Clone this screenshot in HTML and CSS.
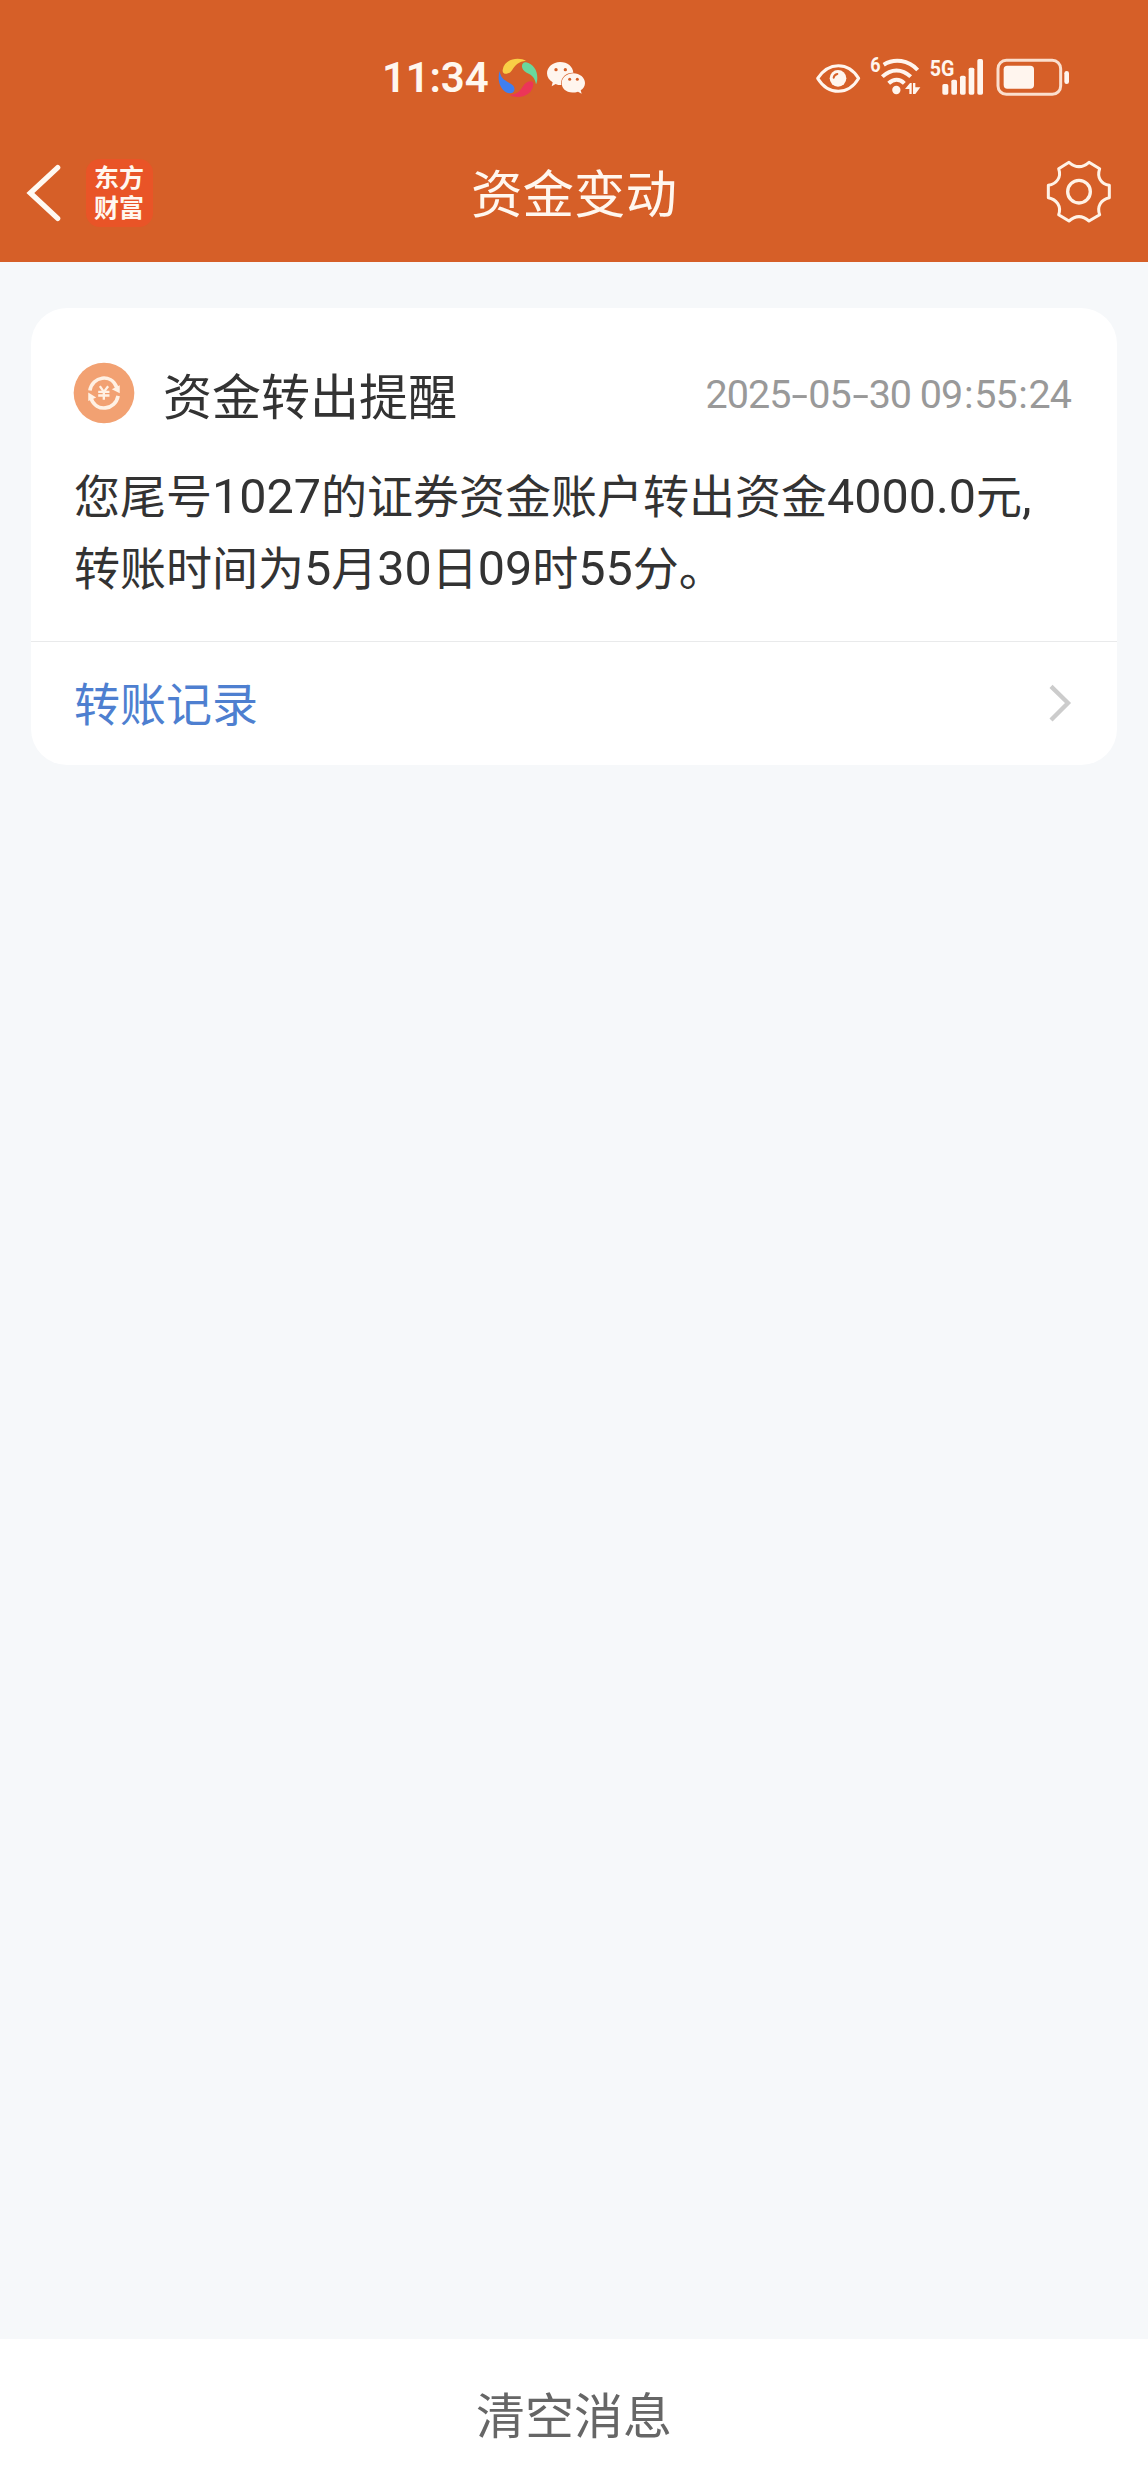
FILE: index.html
```html
<!DOCTYPE html>
<html lang="zh-CN">
<head>
<meta charset="utf-8">
<title>资金变动</title>
<link rel="stylesheet" href="styles.css">
</head>
<body>
<div class="screen">
  <header class="header">
    <div class="status">
      <span class="clock">11:34</span>
      <svg class="ball" viewBox="384 40 120 120">
        <path fill="#f9cf46" d="M398 76C401 55 420 42 443 42C453 42 462 44 468 48C446 50 436 61 427 75C417 92 396 91 398 76Z"/>
        <path fill="#69d89c" d="M468 53C489 57 502 77 502 99C502 107 501 113 498 119C495 101 488 92 470 84C450 75 453 51 468 53Z"/>
        <path fill="#ec3558" d="M490 117C490 142 467 157 443 157C433 157 425 154 419 151C440 149 448 143 459 125C469 108 489 105 490 117Z"/>
        <path fill="#3f7ff0" d="M389 79C391 96 399 105 417 114C441 125 436 145 421 146C402 147 386 124 386 101C386 92 387 85 389 79Z"/>
      </svg>
      <svg class="wechat" viewBox="528 48 120 102">
        <path fill="#fff5ee" d="M570 51C593 51 609 65 610 83C590 82 573 96 573 116L574 120C567 120 562 120 557 117L545 124L548 112C538 105 531 97 531 85C531 66 549 51 570 51Z"/>
        <path fill="#fff5ee" d="M610 85C629 85 645 98 645 114C645 124 640 131 632 136L635 146L624 140C594 149 575 133 575 114C575 98 591 85 610 85Z"/>
        <g fill="#d65f28"><circle cx="558" cy="74" r="5"/><circle cx="586" cy="74" r="5"/><circle cx="599" cy="103" r="4.5"/><circle cx="622" cy="103" r="4.5"/></g>
      </svg>
      <svg class="eye" viewBox="48 54 134 92">
        <path fill="none" stroke="#fff5ee" stroke-width="9" stroke-linejoin="round" d="M53 100C70 74 91 62 115 62C139 62 160 74 176 100C160 127 139 139 115 139C91 139 70 127 53 100Z"/>
        <circle cx="114" cy="100" r="25" fill="#fff5ee"/>
        <path fill="none" stroke="#d65f28" stroke-width="6" stroke-linecap="round" d="M101 98C102 92 106 88 112 87"/>
      </svg>
      <svg class="wifi" viewBox="210 34 152 120">
        <text class="badge-text" x="211" y="83" font-size="61" textLength="31" lengthAdjust="spacingAndGlyphs">6</text>
        <g fill="none" stroke="#fff5ee" stroke-width="12">
          <path d="M251 60C284 40 325 46 353 76"/><path d="M247 96C273 71 306 71 332 96"/><path d="M266 116C281 102 299 102 313 116"/>
        </g>
        <circle cx="289" cy="136" r="12.5" fill="#fff5ee"/>
        <path fill="#fff5ee" d="M315 133L330 115H335V148H328V133ZM339 115H346V128H361L346 148H339Z"/>
      </svg>
      <svg class="signal" viewBox="386 34 168 120">
        <text class="badge-text" x="388" y="94" font-size="66" textLength="74" lengthAdjust="spacingAndGlyphs">5G</text>
        <g fill="#fff5ee"><rect x="426" y="118" width="18" height="32" rx="5"/><rect x="453" y="105" width="17" height="45" rx="5"/><rect x="479" y="93" width="17" height="57" rx="5"/><rect x="505" y="69" width="17" height="81" rx="5"/><rect x="531" y="43" width="17" height="107" rx="5"/></g>
      </svg>
      <svg class="battery" viewBox="588 40 222 116">
        <rect x="594" y="47" width="188" height="102" rx="25" fill="none" stroke="#fbdfce" stroke-width="9"/>
        <rect x="611" y="63" width="91" height="69" rx="11" fill="#fff5ee"/>
        <rect x="793" y="79" width="14" height="39" rx="7" fill="#fff5ee"/>
      </svg>
    </div>
    <div class="nav">
      <svg class="back" viewBox="78 72 105 174"><path fill="none" stroke="#fff9f2" stroke-width="16" stroke-linecap="round" d="M173 83L91 159L173 235"/></svg>
      <div class="logo"><span>东方</span><span>财富</span></div>
      <h1 class="title">资金变动</h1>
      <svg class="gear" viewBox="78 60 198 192">
        <path fill="none" stroke="#fff2e6" stroke-width="9" stroke-linejoin="round" d="M147 67Q177 93 207 67L239 86C230 112 243 132 268 136V173C243 178 230 199 239 224L207 243Q177 217 147 243L116 224C125 199 110 178 85 173V136C110 132 125 112 116 86Z"/>
        <circle cx="177" cy="155" r="34" fill="none" stroke="#fff2e6" stroke-width="10"/>
      </svg>
    </div>
  </header>
  <main class="content">
    <article class="card">
      <div class="card-head">
        <svg class="coin" viewBox="160 217 187 187">
          <circle cx="253.500" cy="310.500" r="91.500" fill="#f2a172"/>
          <g fill="none" stroke="#fff1e4" stroke-width="11"><path d="M211 303C218 260 275 250 292 294"/><path d="M296 319C288 362 230 371 214 326"/></g>
          <path fill="#fff1e4" d="M277 299L301 287V311ZM206 309V335L230 324Z"/>
          <path fill="none" stroke="#fff1e4" stroke-width="7" d="M241 290L253 307L266 290M236 307H270M236 318H270M253 305V331"/>
        </svg>
        <h2 class="card-title">资金转出提醒</h2>
        <time class="date">2025<i>-</i>05<i>-</i>30 09<b>:</b>55<b>:</b>24</time>
      </div>
      <p class="message">您尾号<span class="num">1027</span>的证券资金账户转出资金<span class="num">4000.0</span>元<span class="num">,</span><br>转账时间为<span class="num">5</span>月<span class="num">30</span>日<span class="num">09</span>时<span class="num">55</span>分。</p>
      <div class="link-row">
        <span>转账记录</span>
        <svg class="chevron" viewBox="204 190 72 120"><path fill="none" stroke="#ccc" stroke-width="13" d="M213 200L264 250L213 301"/></svg>
      </div>
    </article>
  </main>
  <footer class="footer">清空消息</footer>
</div>
</body>
</html>
```
FILE: styles.css
```css
* { box-sizing: border-box; }
body {
  margin: 0;
  background: #f6f8fa;
  color: #333;
  font-family: "Noto Sans CJK SC", sans-serif;
}
h1, h2, p { margin: 0; font-weight: 400; }
svg { display: block; flex: none; overflow: visible; }
.screen { display: flex; flex-direction: column; height: 2492px; }

.header { height: 262px; background: #d65f28; color: #fff7ef; }
.status { display: flex; align-items: flex-start; height: 130px; padding: 57px 0 0 382px; }
.clock {
  width: 116px;
  margin-top: -3px;
  font: 600 42px/48px Roboto, sans-serif;
  letter-spacing: -.2px;
}
.ball { width: 40px; height: 40px; margin-top: 1px; }
.wechat { width: 40px; height: 34px; margin: 4px 0 0 8px; }
.eye { width: 44.7px; height: 30.7px; margin: 6px 0 0 230px; }
.wifi { width: 50.7px; height: 40px; margin: -1px 0 0 9.3px; }
.signal { width: 56px; height: 40px; margin: -1px 0 0 8px; }
.battery { width: 74px; height: 38.7px; margin: 1px 0 0 11.3px; }
.badge-text { fill: #fff5ee; font-family: Roboto, sans-serif; font-weight: 700; }

.nav { display: flex; align-items: center; height: 126px; padding: 0 36px 0 26px; }
.back { width: 35px; height: 58px; margin-right: 25px; }
.logo {
  display: flex;
  flex-direction: column;
  justify-content: center;
  width: 67px;
  height: 68px;
  padding: 0 0 4px 8px;
  border-radius: 14px;
  background: #e95427;
  font-size: 25px;
  font-weight: 700;
  line-height: 30px;
}
.title { flex: 1; margin: -4px 0 0 318px; font-size: 51.500px; line-height: 72px; }
.gear { width: 66px; height: 64px; margin-top: -2px; }

.content { flex: 1; padding: 46px 31px 0; }
.card { height: 457px; border-radius: 36px; background: #fff; }
.card-head { display: flex; align-items: center; height: 149px; padding: 23px 45px 0 42px; }
.coin { width: 62px; height: 62px; margin-top: -2px; }
.card-title { flex: 1; margin-left: 28px; font-size: 49px; line-height: 70px; }
.date {
  margin: 2px 1px 0 0;
  color: #999;
  font: 400 39.500px/48px Roboto, sans-serif;
  letter-spacing: -1px;
}
.date i { display: inline-block; margin: 0 4px; font-style: normal; transform: scaleX(1.500); }
.date b { margin: 0 1.7px; font-weight: 400; }
.message { height: 184px; padding: 0 0 0 43px; font-size: 46px; line-height: 72px; white-space: nowrap; }
.num { font-family: Roboto, sans-serif; font-size: 48.500px; line-height: 1; }
.link-row {
  display: flex;
  align-items: center;
  justify-content: space-between;
  height: 124px;
  padding: 0 45px 2px 43px;
  border-top: 1px solid #e9eaeb;
  color: #4e7fd0;
  font-size: 46px;
  line-height: 68px;
}
.link-row span { margin-top: -4px; }
.chevron { width: 24px; height: 40px; }

.footer {
  height: 153px;
  background: #fff;
  color: #666;
  font-size: 49px;
  line-height: 147px;
  text-align: center;
}
```
